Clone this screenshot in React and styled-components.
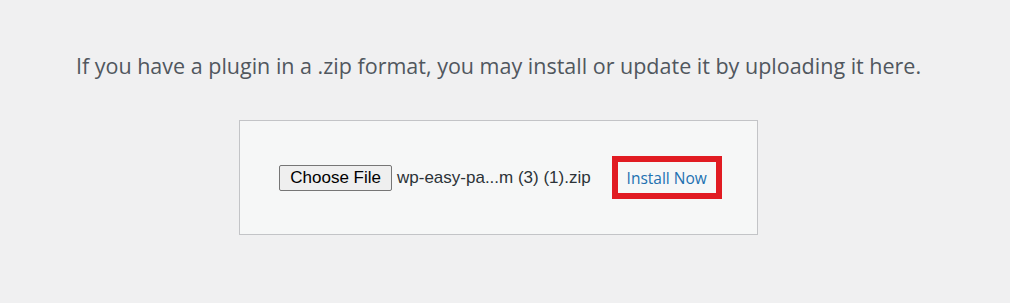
import React from 'react';
import styled, { createGlobalStyle } from 'styled-components';

const GlobalStyle = createGlobalStyle`
  html, body {
    margin: 0;
    padding: 0;
    background: #f0f0f1;
  }
  body {
    font-family: "Open Sans", "Noto Sans", sans-serif;
  }
`;

const Page = styled.div`
  box-sizing: border-box;
  width: 1010px;
  height: 303px;
  padding: 51px 13px 0 0;
  display: flex;
  flex-direction: column;
  align-items: center;
`;

const Help = styled.p`
  margin: 0;
  font-size: 21.5px;
  line-height: 30px;
  color: #50575e;
  text-align: center;
  white-space: nowrap;
`;

const UploadForm = styled.form`
  box-sizing: border-box;
  margin-top: 39px;
  width: 519px;
  height: 115px;
  background: #f6f7f7;
  border: 1px solid #c3c4c7;
  display: flex;
  align-items: center;
  justify-content: center;
  padding-left: 4px;
`;

const FileField = styled.div`
  display: flex;
  align-items: center;
  gap: 5px;
`;

const ChooseButton = styled.button`
  box-sizing: border-box;
  height: 26px;
  padding: 0 10px;
  font-family: "Liberation Sans", Arial, sans-serif;
  font-size: 17px;
  color: #000;
  background: #efefef;
  border: 1px solid #767676;
  border-radius: 2px;
  cursor: pointer;
`;

const FileName = styled.span`
  font-family: "Liberation Sans", Arial, sans-serif;
  font-size: 17px;
  color: #2c3338;
`;

const Highlight = styled.div`
  box-sizing: border-box;
  margin-left: 21px;
  width: 110px;
  height: 43px;
  border: 6px solid #e11b22;
  display: flex;
  align-items: center;
  justify-content: center;
`;

const InstallButton = styled.button`
  padding: 0;
  margin-top: 1px;
  font-family: "Open Sans", "Noto Sans", sans-serif;
  font-size: 15.5px;
  color: #2271b1;
  background: #f6f7f7;
  border: none;
  cursor: pointer;
`;

export default function App() {
  return (
    <>
      <GlobalStyle />
      <Page>
        <Help>If you have a plugin in a .zip format, you may install or update it by uploading it here.</Help>
        <UploadForm onSubmit={e => e.preventDefault()}>
          <FileField>
            <ChooseButton type="button">Choose File</ChooseButton>
            <FileName>wp-easy-pa...m (3) (1).zip</FileName>
          </FileField>
          <Highlight>
            <InstallButton type="submit">Install Now</InstallButton>
          </Highlight>
        </UploadForm>
      </Page>
    </>
  );
}
